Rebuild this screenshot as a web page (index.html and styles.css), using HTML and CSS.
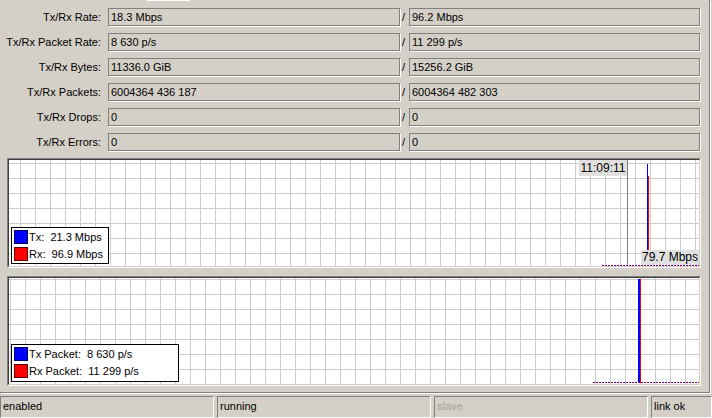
FILE: index.html
```html
<!DOCTYPE html>
<html>
<head>
<meta charset="utf-8">
<link rel="stylesheet" href="styles.css">
</head>
<body>
<div class="window">
  <div class="panel">
    <div class="tabmark"></div>
    <div class="stats">
      <div class="label">Tx/Rx Rate:</div><div class="field">18.3 Mbps</div><div class="slash">/</div><div class="field">96.2 Mbps</div>
      <div class="label">Tx/Rx Packet Rate:</div><div class="field">8 630 p/s</div><div class="slash">/</div><div class="field">11 299 p/s</div>
      <div class="label">Tx/Rx Bytes:</div><div class="field">11336.0 GiB</div><div class="slash">/</div><div class="field">15256.2 GiB</div>
      <div class="label">Tx/Rx Packets:</div><div class="field">6004364 436 187</div><div class="slash">/</div><div class="field">6004364 482 303</div>
      <div class="label">Tx/Rx Drops:</div><div class="field">0</div><div class="slash">/</div><div class="field">0</div>
      <div class="label">Tx/Rx Errors:</div><div class="field">0</div><div class="slash">/</div><div class="field">0</div>
    </div>
    <div class="graph g1">
      <div class="plot grid1">
        <div class="marker"></div>
        <div class="timelabel">11:09:11</div>
        <div class="spike tx1"></div>
        <div class="spike rx1"></div>
        <div class="dots dots1"></div>
        <div class="maxlabel">79.7 Mbps</div>
        <div class="legend">
          <div class="lrow"><span class="sw blue"></span><span class="ltext">Tx:  21.3 Mbps</span></div>
          <div class="lrow"><span class="sw red"></span><span class="ltext">Rx:  96.9 Mbps</span></div>
        </div>
      </div>
    </div>
    <div class="graph g2">
      <div class="plot grid2">
        <div class="spike tx2"></div>
        <div class="spike rx2"></div>
        <div class="dots dots2"></div>
        <div class="legend legend2">
          <div class="lrow"><span class="sw blue"></span><span class="ltext">Tx Packet:  8 630 p/s</span></div>
          <div class="lrow"><span class="sw red"></span><span class="ltext">Rx Packet:  11 299 p/s</span></div>
        </div>
      </div>
    </div>
  </div>
  <div class="statusbar">
    <div class="cell c1">enabled</div>
    <div class="cell c2">running</div>
    <div class="cell c3 dim">slave</div>
    <div class="cell c4">link ok</div>
  </div>
</div>
</body>
</html>
```
FILE: styles.css
```css
html, body {
  margin: 0;
  padding: 0;
}
body {
  background: #d4d0c8;
  font-family: "Liberation Sans", Arial, sans-serif;
  font-size: 11px;
  color: #000;
  width: 712px;
  height: 418px;
  overflow: hidden;
}
.window {
  display: flex;
  flex-direction: column;
  width: 712px;
  height: 418px;
}
.panel {
  width: 709px;
  height: 392px;
  border-right: 1px solid #808080;
  border-bottom: 1px solid #808080;
  box-shadow: 1px 1px 0 #ffffff;
  display: flex;
  flex-direction: column;
}
.tabmark {
  width: 43px;
  height: 1px;
  margin-left: 147px;
  background: #ffffff;
}
.stats {
  margin-top: 7px;
  display: grid;
  grid-template-columns: 108px 292px 9px 291px;
  grid-auto-rows: 18px;
  row-gap: 7px;
}
.label {
  text-align: right;
  padding-right: 7px;
  line-height: 18px;
  white-space: nowrap;
}
.field {
  border: 1px solid #808080;
  box-shadow: 1px 1px 0 #ffffff;
  line-height: 16px;
  padding-left: 2px;
  white-space: nowrap;
  overflow: hidden;
}
.slash {
  line-height: 18px;
  padding-left: 2px;
}
.graph {
  margin-left: 7px;
  width: 694px;
  height: 110px;
  box-sizing: border-box;
  border-top: 1px solid #808080;
  border-left: 1px solid #808080;
  border-right: 1px solid #ffffff;
  border-bottom: 1px solid #ffffff;
}
.g1 { margin-top: 7px; }
.g2 { margin-top: 8px; }
.plot {
  position: relative;
  width: 100%;
  height: 100%;
  box-sizing: border-box;
  border-top: 1px solid #404040;
  border-left: 1px solid #404040;
  border-right: 1px solid #d4d0c8;
  border-bottom: 1px solid #d4d0c8;
  background-color: #ffffff;
  overflow: hidden;
}
.grid1 {
  background-image:
    linear-gradient(90deg, #cccccc 1px, transparent 1px),
    linear-gradient(180deg, #cccccc 1px, transparent 1px);
  background-size: 15px 15px;
  background-position: 11px 3px;
}
.grid2 {
  background-image:
    linear-gradient(90deg, #cccccc 1px, transparent 1px),
    linear-gradient(180deg, #cccccc 1px, transparent 1px);
  background-size: 15px 15px;
  background-position: 1px 1px;
}
.marker {
  position: absolute;
  left: 618px;
  top: 0;
  bottom: 0;
  width: 1px;
  background: #808080;
}
.timelabel {
  position: absolute;
  left: 570px;
  top: 0;
  width: 48px;
  height: 16px;
  line-height: 16px;
  text-align: center;
  background: #e0e0e0;
  font-size: 12px;
  white-space: nowrap;
}
.spike { position: absolute; width: 1px; }
.tx1 { left: 638px; top: 4px; height: 86px; background: #0000ff; }
.rx1 { left: 639px; top: 16px; height: 74px; background: #ff0000; }
.tx2 { left: 629px; top: 1px; height: 104px; width: 2px; background: #0000ff; }
.rx2 { left: 631px; top: 1px; height: 104px; background: #ff0000; }
.maxlabel {
  position: absolute;
  right: 0;
  bottom: 1px;
  height: 15px;
  line-height: 15px;
  padding: 0 1px 0 1px;
  background: #e0e0e0;
  font-size: 12px;
  white-space: nowrap;
}
.dots {
  position: absolute;
  right: 0;
  height: 1px;
  background-image: repeating-linear-gradient(90deg, #ff0000 0 1px, #0000ff 1px 2px, transparent 2px 3px);
}
.dots1 { left: 593px; bottom: 0; }
.dots2 { left: 584px; bottom: 1px; }
.legend {
  position: absolute;
  left: 2px;
  bottom: 2px;
  width: 98px;
  height: 37px;
  border: 1px solid #000000;
  background: #ffffff;
  padding: 2px 0 0 2px;
  box-sizing: border-box;
  display: flex;
  flex-direction: column;
  gap: 3px;
}
.legend2 { width: 168px; height: 38px; }
.lrow {
  display: flex;
  align-items: center;
  height: 14px;
}
.sw {
  width: 12px;
  height: 12px;
  border: 1px solid #000060;
  margin-right: 1px;
}
.blue { background: #0000ff; }
.red { background: #ff0000; border-color: #600000; }
.ltext { white-space: pre; line-height: 14px; }
.statusbar {
  margin-top: 3px;
  display: flex;
  gap: 3px;
  height: 22px;
}
.cell {
  box-sizing: border-box;
  height: 22px;
  border-top: 1px solid #808080;
  border-left: 1px solid #808080;
  border-right: 1px solid #ffffff;
  border-bottom: 1px solid #ffffff;
  line-height: 19px;
  padding-left: 2px;
  white-space: nowrap;
}
.c1 { width: 214px; padding-left: 2px; }
.c2 { width: 214px; }
.c3 { width: 214px; }
.c4 { flex: 1; }
.dim { color: #a0a0a0; }
```
